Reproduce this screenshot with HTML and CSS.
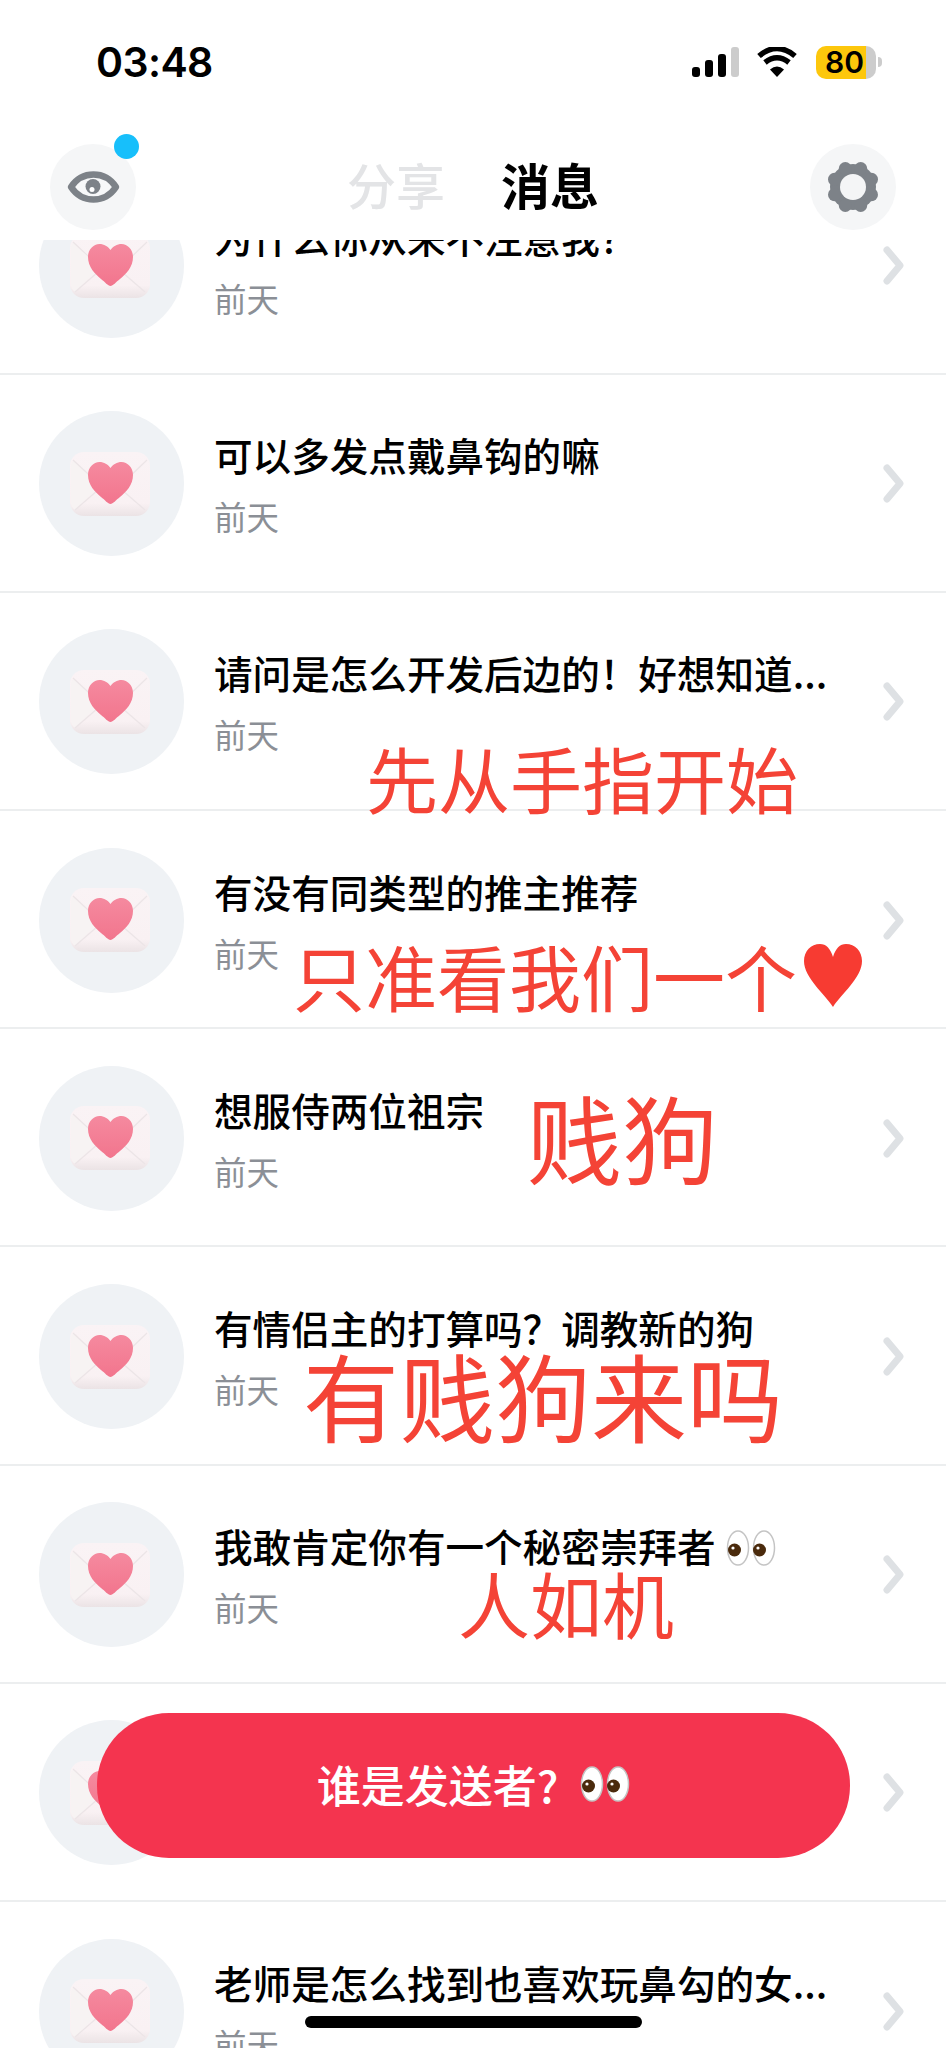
FILE: index.html
```html
<!DOCTYPE html>
<html lang="zh-CN">
    <head>
        <meta charset="UTF-8">
        <title>消息</title>
        <link rel="stylesheet" href="styles.css">
    </head>
    <body>
        <svg class="defs" width="0" height="0">
            <defs>
                <linearGradient id="paper" x1="0" y1="0" x2="0" y2="1">
                    <stop offset="0" stop-color="#faf3f5"/>
                    <stop offset="0.8" stop-color="#f9f1f3"/>
                    <stop offset="1" stop-color="#ebe3e5"/>
                </linearGradient>
                <linearGradient id="pink" x1="0" y1="0" x2="0" y2="1">
                    <stop offset="0" stop-color="#f58a9f"/>
                    <stop offset="1" stop-color="#f2758d"/>
                </linearGradient>
                <filter id="soft" x="-5%" y="-5%" width="110%" height="110%">
                    <feGaussianBlur stdDeviation="0.7"/>
                </filter>
                <symbol id="letter" viewBox="0 0 80 64">
                    <rect x="0" y="0" width="80" height="64" rx="14" fill="url(#paper)"/>
                    <path d="M3 8 L30 33 L5 58 C2 56 1 53 1 50 L1 14 C1 12 2 10 3 8 Z" fill="#f7f3f3"/>
                    <path d="M3 8 L29 32 M77 8 L52 32 M5 58 L28 38 M75 58 L52 38" stroke="#ece5e7" stroke-width="1.2" fill="none"/>
                    <path d="M40.5 52 C38 52 35 48 31 45 C25 40 18 33 18 23 C18 15.5 23.5 10 29.5 10 C34 10 38 12.5 40.5 16 C43 12.5 47 10 51.5 10 C57.5 10 63 15.5 63 23 C63 33 56 40 50 45 C46 48 43 52 40.5 52 Z" fill="url(#pink)" filter="url(#soft)"/>
                </symbol>
                <symbol id="arrow" viewBox="0 0 21 39">
                    <path d="M4 4 L17 19.5 L4 35" stroke="#dee1e4" stroke-width="7" stroke-linecap="round" stroke-linejoin="round" fill="none"/>
                </symbol>
                <symbol id="eyes" viewBox="0 0 50 36">
                    <ellipse cx="12" cy="18" rx="10.5" ry="17" fill="#fff" stroke="#c4c4c4" stroke-width="1.5"/>
                    <ellipse cx="38" cy="18" rx="10.5" ry="17" fill="#fff" stroke="#c4c4c4" stroke-width="1.5"/>
                    <circle cx="8.5" cy="20" r="6.5" fill="#4a2a0c"/>
                    <circle cx="33.5" cy="20" r="6.5" fill="#4a2a0c"/>
                    <circle cx="7" cy="18" r="1.6" fill="#fff"/>
                    <circle cx="32" cy="18" r="1.6" fill="#fff"/>
                </symbol>
            </defs>
        </svg>

        <div class="phone">
            <!-- status bar -->
            <div class="status">
                <span class="time">03:48</span>
                <div class="status-icons">
                    <div class="signal">
                        <i class="bar b1"></i>
                        <i class="bar b2"></i>
                        <i class="bar b3"></i>
                        <i class="bar b4"></i>
                    </div>
                    <svg class="wifi" viewBox="0 0 40 30" width="40" height="30">
                        <path d="M20 30 L13 22.5 Q20 16.5 27 22.5 Z" fill="#000"/>
                        <path d="M8 15.5 Q20 6 32 15.5" stroke="#000" stroke-width="5.5" fill="none"/>
                        <path d="M2 9 Q20 -6 38 9" stroke="#000" stroke-width="5.5" fill="none"/>
                    </svg>
                    <div class="battery">
                        <div class="battery-body"><span>80</span></div>
                        <i class="battery-nub"></i>
                    </div>
                </div>
            </div>

            <!-- top bar -->
            <div class="topbar">
                <div class="round-btn">
                    <svg viewBox="0 0 53 32" width="53" height="32">
                        <path d="M4 16 C10 7 18 3.5 26.5 3.5 C35 3.5 43 7 49 16 C43 25 35 28.5 26.5 28.5 C18 28.5 10 25 4 16 Z" fill="#f7f8f9" stroke="#7d8288" stroke-width="6.5" stroke-linejoin="round"/>
                        <circle cx="26" cy="15.5" r="7.5" fill="#7d8288"/>
                        <circle cx="25" cy="18.5" r="2.5" fill="#fff"/>
                    </svg>
                    <i class="dot"></i>
                </div>
                <div class="tabs">
                    <span class="tab">分享</span>
                    <span class="tab active">消息</span>
                </div>
                <div class="round-btn">
                    <svg viewBox="-27 -27 54 54" width="54" height="54">
                        <g fill="#7d8288">
                            <circle r="23"/>
                            <circle cx="18.5" cy="7.7" r="6.5"/>
                            <circle cx="18.5" cy="-7.7" r="6.5"/>
                            <circle cx="-18.5" cy="7.7" r="6.5"/>
                            <circle cx="-18.5" cy="-7.7" r="6.5"/>
                            <circle cx="7.7" cy="18.5" r="6.5"/>
                            <circle cx="-7.7" cy="18.5" r="6.5"/>
                            <circle cx="7.7" cy="-18.5" r="6.5"/>
                            <circle cx="-7.7" cy="-18.5" r="6.5"/>
                        </g>
                        <circle r="13" fill="#f4f5f6"/>
                    </svg>
                </div>
            </div>

            <!-- message list -->
            <div class="list-wrap">
                <ul class="list">
                    <li class="row">
                        <div class="avatar"><svg class="letter"><use href="#letter"/></svg></div>
                        <div class="text">
                            <p class="title">为什么你从来不注意我？</p>
                            <p class="date">前天</p>
                        </div>
                        <svg class="arrow"><use href="#arrow"/></svg>
                    </li>
                    <li class="row">
                        <div class="avatar"><svg class="letter"><use href="#letter"/></svg></div>
                        <div class="text">
                            <p class="title">可以多发点戴鼻钩的嘛</p>
                            <p class="date">前天</p>
                        </div>
                        <svg class="arrow"><use href="#arrow"/></svg>
                    </li>
                    <li class="row">
                        <div class="avatar"><svg class="letter"><use href="#letter"/></svg></div>
                        <div class="text">
                            <p class="title">请问是怎么开发后边的！好想知道...</p>
                            <p class="date">前天</p>
                        </div>
                        <svg class="arrow"><use href="#arrow"/></svg>
                    </li>
                    <li class="row">
                        <div class="avatar"><svg class="letter"><use href="#letter"/></svg></div>
                        <div class="text">
                            <p class="title">有没有同类型的推主推荐</p>
                            <p class="date">前天</p>
                        </div>
                        <svg class="arrow"><use href="#arrow"/></svg>
                    </li>
                    <li class="row">
                        <div class="avatar"><svg class="letter"><use href="#letter"/></svg></div>
                        <div class="text">
                            <p class="title">想服侍两位祖宗</p>
                            <p class="date">前天</p>
                        </div>
                        <svg class="arrow"><use href="#arrow"/></svg>
                    </li>
                    <li class="row">
                        <div class="avatar"><svg class="letter"><use href="#letter"/></svg></div>
                        <div class="text">
                            <p class="title">有情侣主的打算吗？调教新的狗</p>
                            <p class="date">前天</p>
                        </div>
                        <svg class="arrow"><use href="#arrow"/></svg>
                    </li>
                    <li class="row">
                        <div class="avatar"><svg class="letter"><use href="#letter"/></svg></div>
                        <div class="text">
                            <p class="title">我敢肯定你有一个秘密崇拜者<svg class="eyes"><use href="#eyes"/></svg></p>
                            <p class="date">前天</p>
                        </div>
                        <svg class="arrow"><use href="#arrow"/></svg>
                    </li>
                    <li class="row">
                        <div class="avatar"><svg class="letter"><use href="#letter"/></svg></div>
                        <div class="text"></div>
                        <svg class="arrow"><use href="#arrow"/></svg>
                    </li>
                    <li class="row">
                        <div class="avatar"><svg class="letter"><use href="#letter"/></svg></div>
                        <div class="text">
                            <p class="title">老师是怎么找到也喜欢玩鼻勾的女...</p>
                            <p class="date">前天</p>
                        </div>
                        <svg class="arrow"><use href="#arrow"/></svg>
                    </li>
                </ul>
            </div>

            <!-- red captions added on top of the screenshot -->
            <span class="note note1">先从手指开始</span>
            <span class="note note2">只准看我们一个<svg class="note-heart" viewBox="0 0 58 63"><path d="M29 63 C21 50 0 34 0 17 C0 7 7 0 16 0 C22 0 26.5 4.5 29 13 C31.5 4.5 36 0 42 0 C51 0 58 7 58 17 C58 34 37 50 29 63 Z" fill="#f73b32"/></svg></span>
            <span class="note note3">贱狗</span>
            <span class="note note4">有贱狗来吗</span>
            <span class="note note5">人如机</span>

            <div class="who-btn">谁是发送者?<svg class="who-eyes"><use href="#eyes"/></svg></div>
            <i class="home"></i>
        </div>
    </body>
</html>
```

FILE: styles.css
```css
* {
    box-sizing: border-box;
}

body {
    margin: 0;
    background-color: #fff;
    font-family: "Noto Sans CJK SC", sans-serif;
}

p {
    margin: 0;
}

.defs {
    position: absolute;
}

.phone {
    position: relative;
    width: 946px;
    height: 2048px;
    overflow: hidden;
    display: flex;
    flex-direction: column;
    background-color: #fff;
}

/* status bar */
.status {
    height: 124px;
    padding: 37px 64px 0 96px;
    display: flex;
    justify-content: space-between;
    align-items: flex-start;
}

.time {
    font-family: Inter, sans-serif;
    font-weight: 600;
    font-size: 41px;
    letter-spacing: -0.6px;
    line-height: 50px;
    color: #000;
}

.status-icons {
    display: flex;
    align-items: center;
    height: 50px;
}

.signal {
    display: flex;
    align-items: flex-end;
    gap: 5px;
    height: 30px;
    margin-right: 18px;
}

.bar {
    width: 8px;
    border-radius: 3px;
    background-color: #000;
}

.b1 { height: 10px; }
.b2 { height: 17px; }
.b3 { height: 23px; }
.b4 { height: 30px; background-color: #ccc; }

.wifi {
    margin-right: 19px;
}

.battery {
    display: flex;
    align-items: center;
}

.battery-body {
    width: 60px;
    height: 33px;
    border-radius: 10px;
    background: linear-gradient(to right, #fdc70c 83%, #ccc 83%);
    padding-left: 9px;
    font-family: Inter, sans-serif;
    font-weight: 600;
    font-size: 30px;
    line-height: 33px;
    color: #000;
}

.battery-nub {
    width: 4px;
    height: 10px;
    margin-left: 2px;
    border-radius: 0 5px 5px 0;
    background-color: #ccc;
}

/* top bar */
.topbar {
    height: 116px;
    padding: 20px 50px 10px;
    display: flex;
    justify-content: space-between;
    align-items: center;
}

.round-btn {
    position: relative;
    width: 86px;
    height: 86px;
    border-radius: 50%;
    background-color: #f5f6f7;
    display: flex;
    justify-content: center;
    align-items: center;
}

.dot {
    position: absolute;
    top: -10px;
    right: -3px;
    width: 25px;
    height: 25px;
    border-radius: 50%;
    background-color: #17bffb;
}

.tabs {
    display: flex;
    gap: 56px;
    margin-top: -7px;
}

.tab {
    font-size: 49px;
    line-height: 60px;
    font-weight: 500;
    color: #e3e4e6;
}

.tab.active {
    font-weight: 700;
    color: #000;
}

/* message list */
.list-wrap {
    flex: 1;
    overflow: hidden;
}

.list {
    list-style: none;
    margin: -83.5px 0 0 0;
    padding: 0;
}

.row {
    height: 218.2px;
    padding: 0 42px 0 39px;
    border-bottom: 2px solid #eceeef;
    display: flex;
    align-items: center;
}

.avatar {
    flex: none;
    width: 145px;
    height: 145px;
    margin-top: 2px;
    border-radius: 50%;
    background-color: #eff2f5;
    display: flex;
    justify-content: center;
    align-items: center;
}

.letter {
    width: 80px;
    height: 64px;
    margin-left: -3px;
}

.text {
    flex: 1;
    min-width: 0;
    padding: 2px 0 0 30px;
}

.title {
    height: 50px;
    font-size: 38.6px;
    line-height: 50px;
    font-weight: 500;
    color: #000;
    white-space: nowrap;
}

.date {
    margin-top: 15px;
    font-size: 32.5px;
    line-height: 44px;
    color: #8b8f96;
}

.eyes {
    width: 50px;
    height: 36px;
    margin-left: 10px;
    vertical-align: -4px;
}

.arrow {
    flex: none;
    width: 21px;
    height: 39px;
    margin-top: 2px;
}

/* captions */
.note {
    position: absolute;
    display: flex;
    align-items: center;
    font-size: 72px;
    line-height: 1;
    color: #f44336;
    white-space: nowrap;
}

.note1 { left: 366px; top: 741px; }
.note2 { left: 293px; top: 939px; }
.note3 { left: 526px; top: 1088px; font-size: 96px; }
.note4 { left: 303px; top: 1346px; font-size: 96px; }
.note5 { left: 458px; top: 1566px; }

.note-heart {
    width: 58px;
    height: 63px;
    margin-left: 7px;
}

/* bottom */
.who-btn {
    position: absolute;
    left: 97px;
    top: 1713px;
    width: 753px;
    height: 145px;
    padding-bottom: 4px;
    border-radius: 72px;
    background-color: #f4344f;
    color: #fff;
    font-size: 44px;
    font-weight: 500;
    display: flex;
    justify-content: center;
    align-items: center;
}

.who-eyes {
    width: 50px;
    height: 36px;
    margin-left: 22px;
}

.home {
    position: absolute;
    left: 305px;
    top: 2016px;
    width: 337px;
    height: 12px;
    border-radius: 6px;
    background-color: #000;
}
```
